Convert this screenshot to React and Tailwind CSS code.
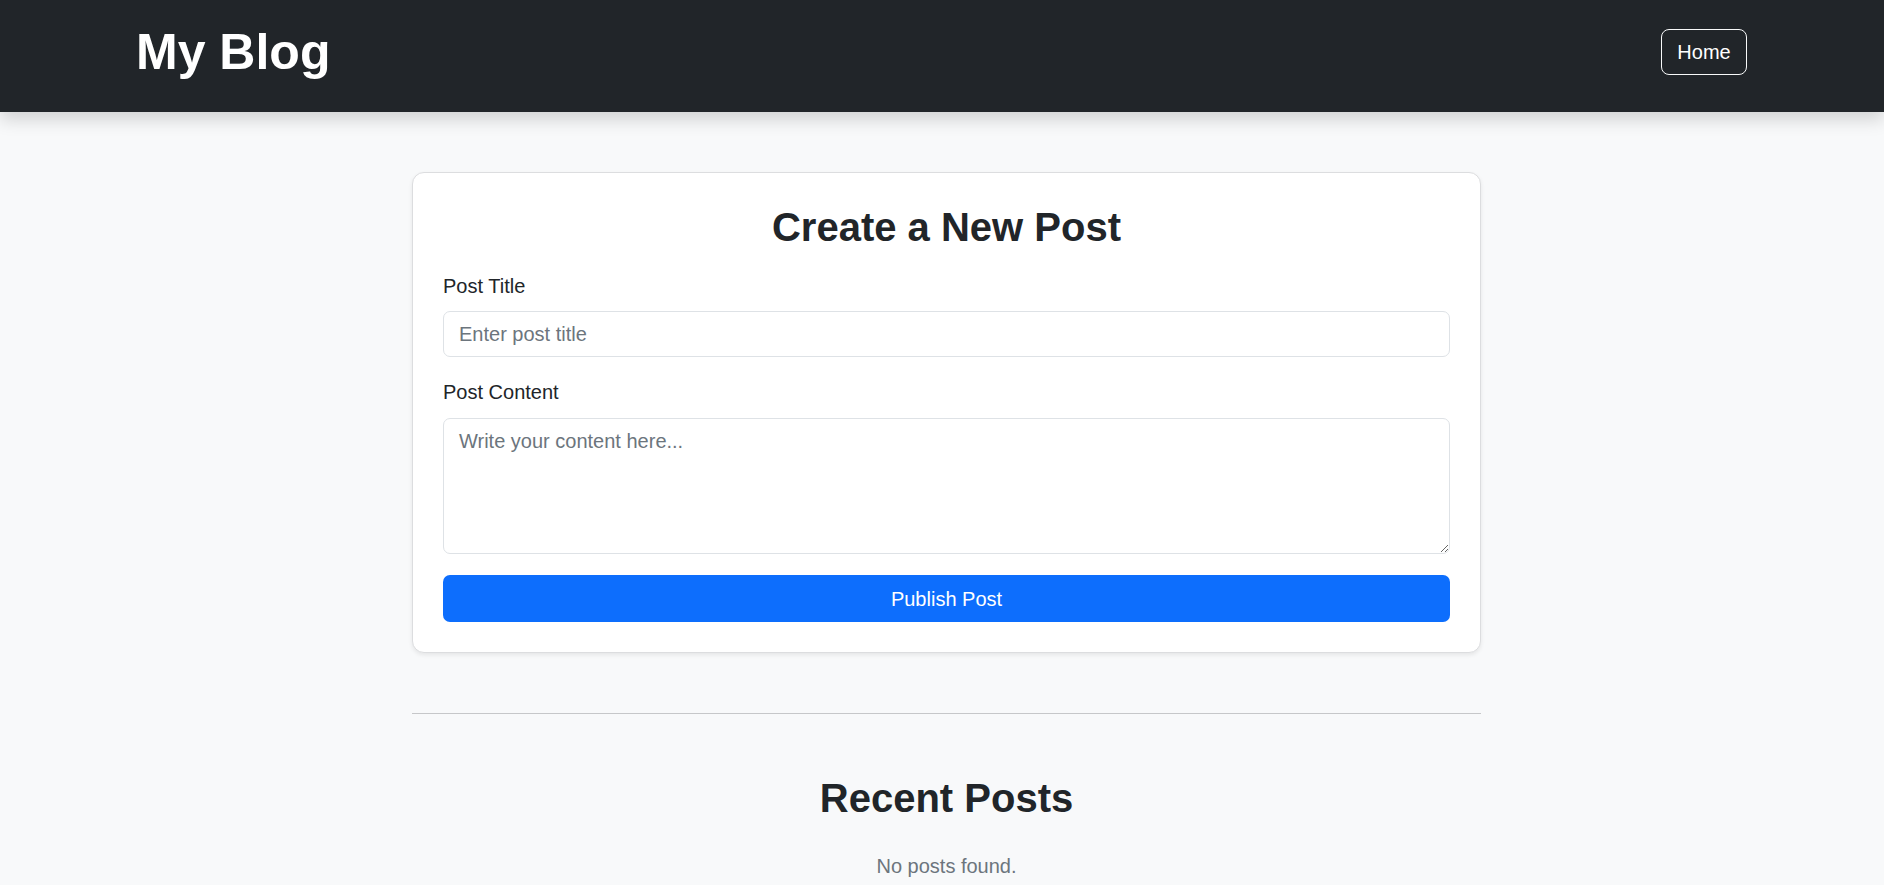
export default function App() {
  return (
    <div className="min-h-screen bg-[#f8f9fa] font-['Liberation_Sans',Arial,sans-serif] text-[#212529]">
      <nav className="h-[112px] bg-[#212529] shadow-[0_8px_16px_rgba(0,0,0,0.15)] flex items-center justify-between pl-[136px] pr-[137px] pb-[8px]">
        <a href="#" className="text-[50px] leading-[1.2] font-bold text-white">My Blog</a>
        <button className="h-[46px] w-[86px] rounded-[8px] border border-[#f8f9fa] text-[20px] text-white">
          Home
        </button>
      </nav>

      <main className="flex justify-center pl-[9px] pt-[60px]">
        <div className="w-[1069px]">
          <div className="bg-white border border-[#dcdddf] rounded-[12px] shadow-[0_2px_4px_rgba(0,0,0,0.08)] p-[30px]">
            <h2 className="text-[40px] leading-[48px] font-bold text-center mb-[20px]">Create a New Post</h2>
            <div className="mb-[20px]">
              <label className="block text-[20px] leading-[30px] mb-[10px]">Post Title</label>
              <input
                type="text"
                placeholder="Enter post title"
                className="block w-full h-[46px] px-[15px] text-[20px] leading-[30px] border border-[#dee2e6] rounded-[7px] bg-white placeholder:text-[#6c757d] outline-none"
              />
            </div>
            <div className="mb-[21px]">
              <label className="block text-[20px] leading-[30px] mb-[11px]">Post Content</label>
              <textarea
                placeholder="Write your content here..."
                className="block w-full h-[136px] px-[15px] py-[7px] text-[20px] leading-[30px] border border-[#dee2e6] rounded-[7px] bg-white placeholder:text-[#6c757d] outline-none"
              />
            </div>
            <button className="block w-full h-[47px] rounded-[7px] bg-[#0d6efd] text-white text-[20px]">
              Publish Post
            </button>
          </div>

          <hr className="mt-[60px] border-0 border-t border-[#c6c7c9]" />

          <section className="pt-[60px] text-center">
            <h2 className="text-[40px] leading-[48px] font-bold">Recent Posts</h2>
            <p className="mt-[29px] text-[20px] leading-[30px] text-[#6c757d]">No posts found.</p>
          </section>
        </div>
      </main>
    </div>
  );
}
